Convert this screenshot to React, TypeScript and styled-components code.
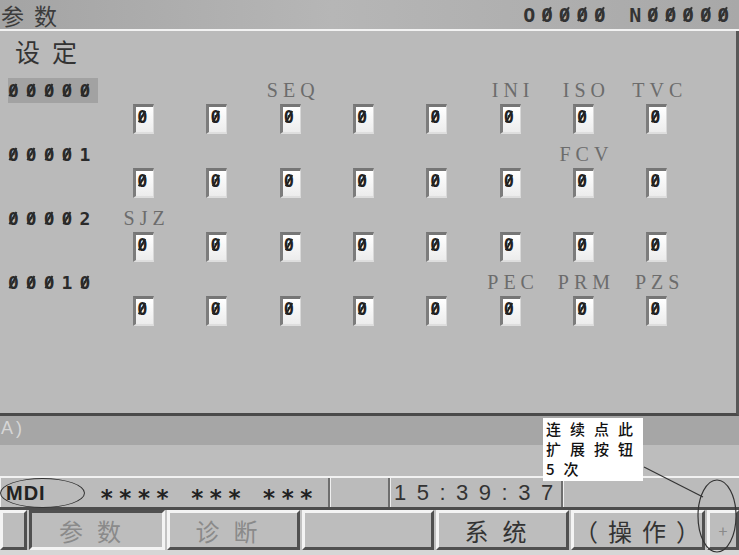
import React from 'react';
import styled, { createGlobalStyle } from 'styled-components';

const GlobalStyle = createGlobalStyle`
  html, body { margin: 0; padding: 0; background: #c8c8c8; }
  body { font-family: "Noto Sans CJK SC", "Noto Sans", sans-serif; }
`;

type Param = {
  no: string;
  active?: boolean;
  names: string[];
  values: string[];
};

const PARAMS: Param[] = [
  { no: '00000', active: true, names: ['', '', 'SEQ', '', '', 'INI', 'ISO', 'TVC'], values: ['0', '0', '0', '0', '0', '0', '0', '0'] },
  { no: '00001', names: ['', '', '', '', '', '', 'FCV', ''], values: ['0', '0', '0', '0', '0', '0', '0', '0'] },
  { no: '00002', names: ['SJZ', '', '', '', '', '', '', ''], values: ['0', '0', '0', '0', '0', '0', '0', '0'] },
  { no: '00010', names: ['', '', '', '', '', 'PEC', 'PRM', 'PZS'], values: ['0', '0', '0', '0', '0', '0', '0', '0'] },
];

const MONO = `"DejaVu Sans Mono", "Liberation Mono", monospace`;

// CNC font draws zero with a slash; --ls carries the parent's letter-spacing
const Zero = styled.span`
  position: relative;
  letter-spacing: 0;
  margin-right: var(--ls, 0px);
  &::after {
    content: '';
    position: absolute;
    left: 50%;
    top: 16%;
    width: 1.7px;
    height: 66%;
    margin-left: -1px;
    background: currentColor;
    transform: rotate(30deg);
  }
`;

const CncText = ({ text }: { text: string }) => (
  <>
    {text.split('').map((c, i) => (c === '0' ? <Zero key={i}>0</Zero> : <React.Fragment key={i}>{c}</React.Fragment>))}
  </>
);

const Screen = styled.div`
  position: relative;
  width: 739px;
  height: 555px;
  overflow: hidden;
  display: flex;
  flex-direction: column;
  background: #c6c6c6;
`;

const TitleBar = styled.div`
  height: 29px;
  flex: none;
  display: flex;
  align-items: center;
  justify-content: space-between;
  padding: 0 4px 0 1px;
  background: linear-gradient(90deg, #a4a4a4, #b6b6b6 45%, #a8a8a8);
  border-bottom: 2px solid #f2f2f2;
`;

const Title = styled.div`
  font-size: 23px;
  line-height: 28px;
  letter-spacing: 10px;
  color: #3c3c3c;
`;

const ProgNo = styled.div`
  --ls: 5.6px;
  font-family: ${MONO};
  font-weight: 700;
  font-size: 20px;
  letter-spacing: var(--ls);
  color: #333;
`;

const Main = styled.div`
  flex: 1;
  background: #bababa;
  border-right: 3px solid #585858;
  border-bottom: 3px solid #4a4a4a;
  padding-left: 8px;
`;

const Heading = styled.div`
  height: 46px;
  line-height: 40px;
  padding-left: 7px;
  font-size: 25px;
  letter-spacing: 12px;
  color: #333;
`;

const Block = styled.div`
  display: grid;
  grid-template-columns: 99px repeat(8, 73.3px);
  grid-template-rows: 26px 38px;
  align-items: center;
`;

const ParamNo = styled.div<{ $active?: boolean }>`
  --ls: 7px;
  justify-self: start;
  height: 25px;
  width: 90px;
  display: flex;
  align-items: center;
  font-family: ${MONO};
  font-weight: 700;
  font-size: 18px;
  letter-spacing: var(--ls);
  color: #2a2a2a;
  background: ${(p) => (p.$active ? '#a2a2a2' : 'transparent')};
`;

const BitName = styled.div`
  justify-self: center;
  padding-left: 6px;
  font-family: "Liberation Serif", serif;
  font-size: 20px;
  letter-spacing: 5px;
  color: #6c6c6c;
`;

const ValueBox = styled.div`
  grid-row: 2;
  align-self: start;
  justify-self: center;
  width: 16px;
  height: 25px;
  margin-top: 1px;
  background: linear-gradient(#ffffff, #ececec);
  border-top: 3px solid #767676;
  border-left: 3px solid #7c7c7c;
  border-right: 1px solid #d8d8d8;
  border-bottom: 2px solid #dedede;
  font-family: ${MONO};
  font-weight: 700;
  font-size: 17px;
  line-height: 21px;
  padding-left: 1px;
  color: #222;
`;

const InputLine = styled.div`
  height: 29px;
  flex: none;
  background: #a6a6a6;
  color: #d6d6d6;
  font-family: "Liberation Sans", sans-serif;
  font-size: 18px;
  line-height: 24px;
  letter-spacing: 3px;
  padding-left: 1px;
`;

const Strip = styled.div`
  height: 31px;
  flex: none;
  background: #bdbdbd;
`;

const StatusBar = styled.div`
  height: 29px;
  flex: none;
  display: flex;
  background: #bbbbbb;
  border-top: 2px solid #f2f2f2;
  border-bottom: 3px solid #4c4c4c;
`;

const StatusCell = styled.div<{ $w?: number }>`
  ${(p) => (p.$w ? `width: ${p.$w}px;` : 'flex: 1;')}
  flex-shrink: 0;
  display: flex;
  align-items: center;
  border-right: 2px solid #6e6e6e;
  box-shadow: inset 1px 0 0 #efefef;
  &:last-child { border-right: none; }
`;

const Mode = styled.span`
  display: inline-block;
  padding: 0 38px 0 5px;
  height: 28px;
  line-height: 28px;
  border: 1.5px solid #333;
  border-radius: 50%;
  font-family: "Liberation Sans", sans-serif;
  font-weight: 700;
  font-size: 20px;
  letter-spacing: 1px;
  color: #222;
`;

const Stars = styled.span<{ $gap: number }>`
  margin-left: ${(p) => p.$gap}px;
  font-family: "DejaVu Sans", sans-serif;
  font-weight: 700;
  font-size: 23px;
  letter-spacing: 6.6px;
  color: #222;
  transform: translateY(5px);
`;

const Clock = styled.span`
  padding-left: 4px;
  font-family: "Liberation Sans", sans-serif;
  font-size: 22px;
  letter-spacing: 10.5px;
  color: #333;
`;

const SoftKeys = styled.div`
  height: 40px;
  flex: none;
  display: flex;
  gap: 2px;
  background: #c2c2c2;
`;

const Key = styled.div<{ $w: number; $pressed?: boolean; $dim?: boolean }>`
  width: ${(p) => p.$w}px;
  flex: none;
  box-sizing: border-box;
  display: flex;
  align-items: center;
  justify-content: center;
  background: #bdbdbd;
  border-style: solid;
  border-width: 3px;
  border-color: ${(p) =>
    p.$pressed ? '#505050 #f4f4f4 #f4f4f4 #505050' : '#f4f4f4 #505050 #505050 #f4f4f4'};
  font-size: 24px;
  letter-spacing: 14px;
  color: ${(p) => (p.$dim ? '#8a8a8a' : '#333')};
`;

const Bottom = styled.div`
  height: 5px;
  flex: none;
  background: #d6d6d6;
`;

const Callout = styled.div`
  position: absolute;
  left: 543px;
  top: 418px;
  width: 100px;
  height: 63px;
  box-sizing: border-box;
  padding: 1px 0 0 3px;
  background: #fff;
  font-size: 15px;
  font-weight: 500;
  line-height: 20px;
  letter-spacing: 9px;
  color: #111;
  white-space: pre;
`;

const Overlay = styled.svg`
  position: absolute;
  left: 0;
  top: 0;
  pointer-events: none;
`;

export default function App() {
  return (
    <Screen>
      <GlobalStyle />
      <TitleBar>
        <Title>参数</Title>
        <ProgNo><CncText text="O0000 N00000" /></ProgNo>
      </TitleBar>
      <Main>
        <Heading>设定</Heading>
        {PARAMS.map((p) => (
          <Block key={p.no}>
            <ParamNo $active={p.active}><CncText text={p.no} /></ParamNo>
            {p.names.map((n, i) => (
              <BitName key={i} style={{ gridColumn: i + 2 }}>{n}</BitName>
            ))}
            {p.values.map((v, i) => (
              <ValueBox key={i} style={{ gridColumn: i + 2 }}><CncText text={v} /></ValueBox>
            ))}
          </Block>
        ))}
      </Main>
      <InputLine>A)</InputLine>
      <Strip />
      <StatusBar>
        <StatusCell $w={328}>
          <Mode>MDI</Mode>
          <Stars $gap={16}>****</Stars>
          <Stars $gap={16}>***</Stars>
          <Stars $gap={16}>***</Stars>
        </StatusCell>
        <StatusCell $w={58} />
        <StatusCell $w={171}>
          <Clock>15:39:37</Clock>
        </StatusCell>
        <StatusCell />
      </StatusBar>
      <SoftKeys>
        <Key $w={27} />
        <Key $w={136} $pressed $dim>参数</Key>
        <Key $w={133} $dim>诊断</Key>
        <Key $w={132} />
        <Key $w={133}>系统</Key>
        <Key $w={134} style={{ letterSpacing: 10 }}>（操作）</Key>
        <Key $w={32} style={{ letterSpacing: 0, fontSize: 16 }} $dim>+</Key>
      </SoftKeys>
      <Bottom />
      <Callout>{'连续点此\n扩展按钮\n5次'}</Callout>
      <Overlay width={739} height={555}>
        <line x1={644} y1={467} x2={703} y2={497} stroke="#333" strokeWidth={1.2} />
        <ellipse cx={717} cy={516} rx={19} ry={36} stroke="#333" strokeWidth={1.2} fill="none" />
      </Overlay>
    </Screen>
  );
}
